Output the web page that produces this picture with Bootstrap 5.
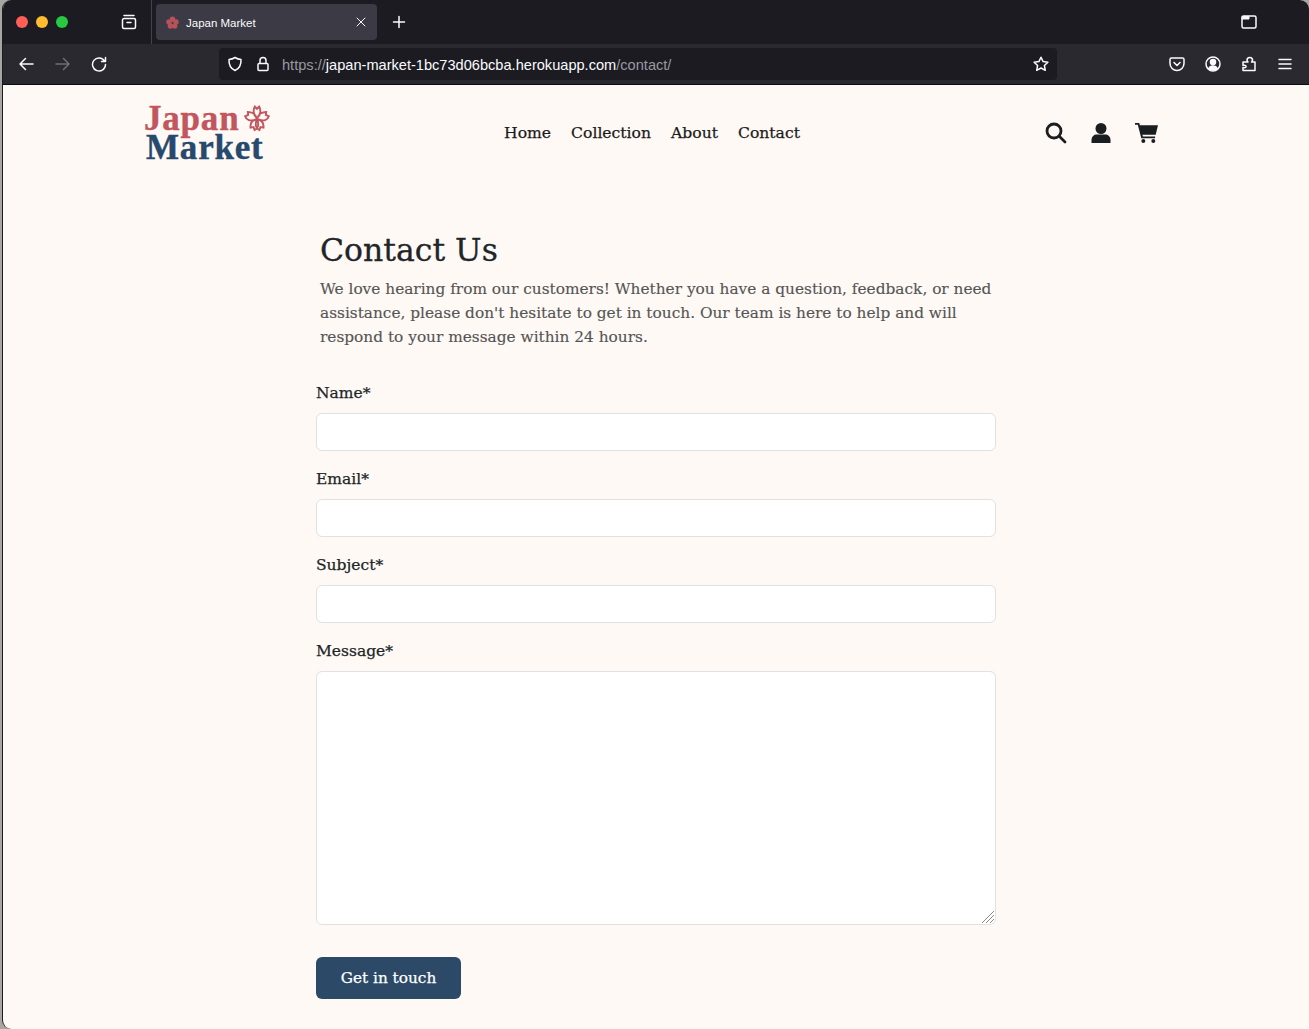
<!DOCTYPE html>
<html lang="en">
<head>
    <meta charset="UTF-8">
    <meta name="viewport" content="width=device-width, initial-scale=1.0">
    <title>Japan Market</title>
    <link href="https://cdn.jsdelivr.net/npm/bootstrap@5.3.3/dist/css/bootstrap.min.css" rel="stylesheet">
    <style>
        html, body { height: 100%; }
        body { background: #a8a6a2; padding-left: 2px; overflow: hidden; font-family: "DejaVu Serif", serif; }
        .window { height: 1029px; background: #fff9f5; border-left: 1px solid #1c1b22; border-radius: 9px 9px 0 9px; overflow: hidden; }
        .tabstrip { height: 44px; background: #1c1b22; font-family: "Liberation Sans", sans-serif; }
        .traffic { width: 12px; height: 12px; border-radius: 50%; }
        .tl-red { background: #ff5f57; }
        .tl-yellow { background: #febc2e; }
        .tl-green { background: #28c840; }
        .traffic-group { gap: 8px; padding-left: 13px; width: 118px; }
        .tab-divider { width: 1px; height: 44px; background: #44434b; margin-left: 14px; margin-right: 4px; }
        .tab-box { width: 221px; height: 36px; background: #3b3a45; border-radius: 4px; color: #fbfbfe; font-size: 11.5px; padding: 0 10px 0 10px; }
        .tab-name { padding-top: 4px; margin-left: -1px; }
        .toolbar { height: 41px; background: #2a2930; border-bottom: 1px solid #0c0c0d; padding-left: 15px; }
        .urlbar { width: 838px; height: 32px; background: #1c1b22; border-radius: 4px; padding: 0 8px 0 8px; margin-left: 112px; font-family: "Liberation Sans", sans-serif; font-size: 14.6px; color: #fbfbfe; }
        .url-text { margin-left: 11px; padding-top: 4px; }
        .url-dim { color: #9a99a1; }
        .chrome-icon { fill: none; stroke: #fbfbfe; stroke-width: 1.5; stroke-linecap: round; stroke-linejoin: round; flex: none; }
        .icon-off { stroke: #6f6e75; }
        .gap-tool { margin-left: 20px; }
        .site-head { width: 1014px; margin: 0 0 0 141px; height: 96px; }
        .logo-box { width: 130px; line-height: 31px; font-family: "Liberation Serif", serif; font-weight: 700; font-size: 35px; letter-spacing: .8px; }
        .logo-red { color: #c2565e; -webkit-text-stroke: .4px #c2565e; }
        .logo-blue { color: #27496d; padding-left: 2px; margin-top: -2px; -webkit-text-stroke: .4px #27496d; }
        .menu-link { color: #1b1b1b; font-size: 15.6px; padding: 2px 10px 0; text-decoration: none; -webkit-text-stroke: .25px #1b1b1b; }
        .head-icons { gap: 24px; }
        .contact-wrap { width: 680px; margin: 0 auto; padding-top: 47px; }
        .contact-title { font-size: 31.5px; line-height: 44px; font-weight: 400; color: #212529; margin: 0 0 0 4px; font-family: "DejaVu Serif", serif; -webkit-text-stroke: .3px #212529; }
        .contact-intro { font-size: 15.35px; line-height: 24px; color: #555; margin: 5px 0 32px 4px; -webkit-text-stroke: .15px #555; }
        .field-label { font-size: 15.5px; line-height: 24px; color: #212529; margin-bottom: 8px; display: block; -webkit-text-stroke: .25px #212529; }
        .field-input { height: 38px; border-color: #dee2e6; }
        .field-text { height: 254px; border-color: #dee2e6; resize: none; }
        .resize-grip { position: absolute; right: 1px; bottom: 1px; pointer-events: none; }
        .send-btn { background: #2c4a68; color: #fff; width: 145px; height: 42px; font-size: 15.3px; margin-top: 16px; border: 0; padding: 0; -webkit-text-stroke: .25px #fff; }
    </style>
</head>
<body>
    <div class="window d-flex flex-column">
        <div class="tabstrip d-flex align-items-center">
            <div class="d-flex align-items-center traffic-group">
                <span class="traffic tl-red"></span>
                <span class="traffic tl-yellow"></span>
                <span class="traffic tl-green"></span>
            </div>
            <svg class="chrome-icon" width="16" height="16" viewBox="0 0 16 16"><path d="M3 1.500h10M1.500 6a1.500 1.500 0 0 1 1.500-1.500h10a1.500 1.500 0 0 1 1.500 1.500v7a1.500 1.500 0 0 1-1.500 1.500h-10a1.500 1.500 0 0 1-1.500-1.500zM6 8.500h4"/></svg>
            <span class="tab-divider"></span>
            <div class="tab-box d-flex align-items-center">
                <svg width="13" height="13" viewBox="0 0 24 24" class="flex-none me-2"><g fill="#b5525a"><circle cx="12" cy="6" r="5"/><circle cx="5.500" cy="11" r="5"/><circle cx="18.500" cy="11" r="5"/><circle cx="8" cy="18.500" r="5"/><circle cx="16" cy="18.500" r="5"/></g></svg>
                <span class="flex-grow-1 tab-name">Japan Market</span>
                <svg class="chrome-icon" width="12" height="12" viewBox="0 0 12 12"><path stroke-width="1" d="M2 2l8 8M10 2l-8 8"/></svg>
            </div>
            <svg class="chrome-icon" style="margin-left:15px" width="14" height="14" viewBox="0 0 14 14"><path d="M7 1.500v11M1.500 7h11"/></svg>
            <svg class="chrome-icon ms-auto" style="margin-right:52px" width="16" height="14" viewBox="0 0 16 14"><path d="M2.500 1h11A1.500 1.500 0 0 1 15 2.500v9a1.500 1.500 0 0 1-1.500 1.500h-11A1.500 1.500 0 0 1 1 11.500v-9A1.500 1.500 0 0 1 2.500 1z"/><path fill="#fbfbfe" stroke-width="1" d="M1.500 1.500h6.500v2.500H1.500z"/></svg>
        </div>
        <div class="toolbar d-flex align-items-center">
            <svg class="chrome-icon" width="16" height="16" viewBox="0 0 16 16"><path d="M15 8H2M7.500 2.500L2 8l5.500 5.500"/></svg>
            <svg class="chrome-icon icon-off" style="margin-left:21px" width="16" height="16" viewBox="0 0 16 16"><path d="M1 8h13M8.500 2.500L14 8l-5.500 5.500"/></svg>
            <svg class="chrome-icon" style="margin-left:20px" width="16" height="16" viewBox="0 0 16 16"><path d="M13.500 5A6.500 6.500 0 1 0 14.500 8.500M14.500 1.500V5.500H10.500"/></svg>
            <div class="urlbar d-flex align-items-center">
                <svg class="chrome-icon" width="16" height="16" viewBox="0 0 16 16"><path d="M8 1.500c2 1.300 4 1.800 6 2 .3 5-1.500 9-6 11-4.500-2-6.300-6-6-11 2-.2 4-.7 6-2z"/></svg>
                <svg class="chrome-icon" style="margin-left:12px" width="16" height="16" viewBox="0 0 16 16"><path d="M4 7.500h8a1 1 0 0 1 1 1v5a1 1 0 0 1-1 1H4a1 1 0 0 1-1-1v-5a1 1 0 0 1 1-1zM5 7.500V4.500a3 3 0 0 1 6 0v3"/></svg>
                <span class="flex-grow-1 url-text"><span class="url-dim">https://</span>japan-market-1bc73d06bcba.herokuapp.com<span class="url-dim">/contact/</span></span>
                <svg class="chrome-icon" width="16" height="16" viewBox="0 0 16 16"><path d="M8 1.200l2.100 4.400 4.800.6-3.500 3.300.9 4.800L8 12l-4.300 2.300.9-4.800L1.100 6.200l4.800-.6z"/></svg>
            </div>
            <svg class="chrome-icon" style="margin-left:112px" width="16" height="16" viewBox="0 0 16 16"><path d="M2.500 2h11A1.500 1.500 0 0 1 15 3.500V7.500a7 7 0 0 1-14 0V3.500A1.500 1.500 0 0 1 2.500 2zM5 6.500l3 3 3-3"/></svg>
            <svg class="chrome-icon gap-tool" width="16" height="16" viewBox="0 0 16 16"><circle cx="8" cy="8" r="7"/><circle cx="8" cy="6" r="2.500" fill="#fbfbfe"/><path fill="#fbfbfe" d="M3.800 12.500c.8-1.800 2.300-2.500 4.200-2.500s3.400.7 4.200 2.500c-1 1-2.500 1.500-4.200 1.500s-3.200-.5-4.200-1.500z"/></svg>
            <svg class="chrome-icon gap-tool" width="16" height="16" viewBox="0 0 16 16"><path d="M2 11.500c2.500.5 3.500-.5 3-1.500-.5-1-2.500-1-3-.5V6h5c-1-1-1.500-2-.5-3.500 1-1.300 3.500-1.300 4.500 0 .8 1 .5 2.500-.5 3.500h3.500v8.500H2z"/></svg>
            <svg class="chrome-icon gap-tool" width="16" height="16" viewBox="0 0 16 16"><path d="M2 3.500h12M2 8h12M2 12.500h12"/></svg>
        </div>

        <header class="site-head d-flex align-items-center justify-content-between">
            <a href="#" class="logo-box text-decoration-none">
                <span class="logo-red d-flex align-items-center">Japan
                    <svg class="flex-none" style="margin-left:4px" width="28" height="28" viewBox="0 0 26 26" fill="none" stroke="#c2565e" stroke-width="1.800"><path d="M13 12C9 9 9.500 4 11 1.500l2 2 2-2c1.500 2.500 2 7.500-2 10.500zM13 13c-1-5-5.500-6.500-8.500-6.500l.3 2.800L2 10.500c.8 3 4.500 5.500 11 2.500zM13 13c1-5 5.500-6.500 8.500-6.500l-.3 2.800 2.800 1.200c-.8 3-4.500 5.500-11 2.500zM13 13c-4 1-6.500 4-6 8l2.800-.5 1 2.700c3-1 4.500-5 2.200-10.200zM13 13c4 1 6.500 4 6 8l-2.800-.5-1 2.700c-3-1-4.500-5-2.200-10.200z"/></svg>
                </span>
                <span class="logo-blue d-block">Market</span>
            </a>
            <nav class="d-flex" style="margin-right:15px">
                <a href="#" class="menu-link">Home</a>
                <a href="#" class="menu-link">Collection</a>
                <a href="#" class="menu-link">About</a>
                <a href="#" class="menu-link">Contact</a>
            </nav>
            <div class="d-flex align-items-center head-icons">
                <svg width="22" height="22" viewBox="0 0 22 22" fill="none" stroke="#1b1e21" stroke-width="2.800" stroke-linecap="round"><circle cx="9" cy="9" r="7"/><path d="M14.500 14.500L20 20"/></svg>
                <svg width="20" height="20" viewBox="0 0 20 20" fill="#1b1e21"><circle cx="10" cy="5.500" r="5.500"/><path d="M5.500 11.500h9c3 0 5 2.500 5 5.500v3H.5v-3c0-3 2-5.500 5-5.500z"/></svg>
                <svg width="23" height="20" viewBox="0 0 23 20" fill="#1b1e21"><path d="M0 0h4.200l.7 2.300H23l-2.300 9.400H7.400l.5 1.800h12.200v1.800H6.300L2.800 1.800H0z"/><circle cx="8.300" cy="18" r="2"/><circle cx="18.300" cy="18" r="2"/></svg>
            </div>
        </header>

        <main class="contact-wrap">
            <h1 class="contact-title">Contact Us</h1>
            <p class="contact-intro">We love hearing from our customers! Whether you have a question, feedback, or need assistance, please don't hesitate to get in touch. Our team is here to help and will respond to your message within 24 hours.</p>
            <form>
                <div class="mb-3">
                    <label for="contact-name" class="field-label">Name*</label>
                    <input type="text" class="form-control field-input" id="contact-name">
                </div>
                <div class="mb-3">
                    <label for="contact-email" class="field-label">Email*</label>
                    <input type="email" class="form-control field-input" id="contact-email">
                </div>
                <div class="mb-3">
                    <label for="contact-subject" class="field-label">Subject*</label>
                    <input type="text" class="form-control field-input" id="contact-subject">
                </div>
                <div class="mb-3 position-relative">
                    <label for="contact-message" class="field-label">Message*</label>
                    <textarea class="form-control field-text d-block" id="contact-message"></textarea>
                    <svg class="resize-grip" width="14" height="14" viewBox="0 0 14 14" stroke="#8a8a8a" stroke-width="1"><path d="M1 13L13 1M5 13l8-8M9 13l4-4"/></svg>
                </div>
                <button type="submit" class="btn send-btn">Get in touch</button>
            </form>
        </main>
    </div>
    <script src="https://cdn.jsdelivr.net/npm/bootstrap@5.3.3/dist/js/bootstrap.bundle.min.js"></script>
</body>
</html>
